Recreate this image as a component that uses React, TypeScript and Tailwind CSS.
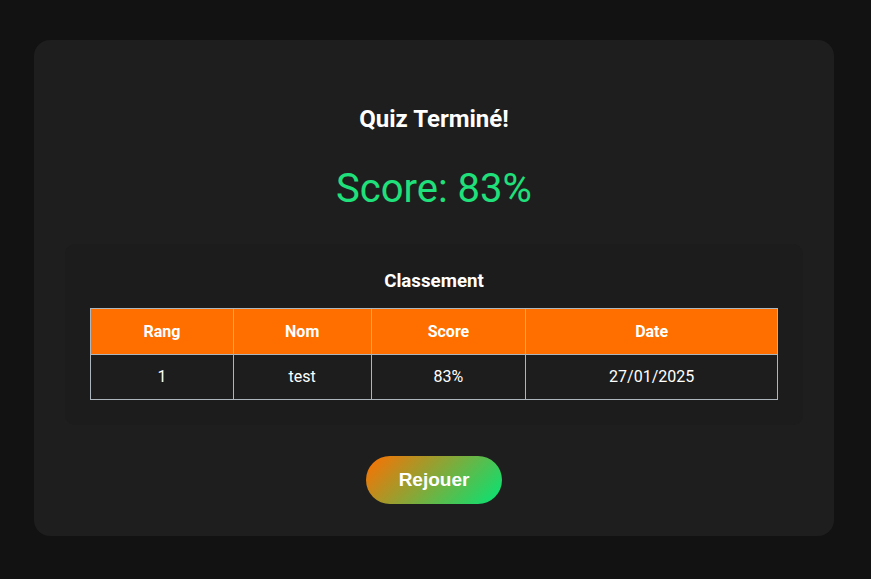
const rows = [{ rang: 1, nom: 'test', score: '83%', date: '27/01/2025' }]

function Leaderboard() {
  return (
    <div className="mt-8 rounded-[10px] bg-[#1c1c1c] p-[25px]">
      <h3 className="text-center text-[18.72px] font-bold leading-[24px] text-white">Classement</h3>
      <table className="mt-[15px] w-full border-collapse text-[16px] text-white">
        <thead>
          <tr className="bg-[#ff6f00]">
            <th className="w-[143px] border border-[#aeb6bd] py-3 font-bold leading-[21px]">Rang</th>
            <th className="w-[138px] border border-[#aeb6bd] py-3 font-bold leading-[21px]">Nom</th>
            <th className="w-[155px] border border-[#aeb6bd] py-3 font-bold leading-[21px]">Score</th>
            <th className="w-[252px] border border-[#aeb6bd] py-3 font-bold leading-[21px]">Date</th>
          </tr>
        </thead>
        <tbody>
          {rows.map(r => (
            <tr key={r.rang} className="bg-[#1d1d1d]">
              <td className="border border-[#aeb6bd] py-3 text-center leading-[20px]">{r.rang}</td>
              <td className="border border-[#aeb6bd] py-3 text-center leading-[20px]">{r.nom}</td>
              <td className="border border-[#aeb6bd] py-3 text-center leading-[20px]">{r.score}</td>
              <td className="border border-[#aeb6bd] py-3 text-center leading-[20px]">{r.date}</td>
            </tr>
          ))}
        </tbody>
      </table>
    </div>
  )
}

export default function App() {
  return (
    <div className="min-h-screen bg-[#121212] pt-10 font-['Roboto',sans-serif]">
      <div className="ml-[34px] w-[800px] rounded-2xl bg-[#1e1e1e] px-[31px] pt-[65px] pb-8">
        <h2 className="text-center text-[24px] font-bold leading-[28px] text-white">Quiz Terminé!</h2>
        <p className="mt-8 text-center text-[40px] leading-[47px] text-[#1fe07a]">Score: 83%</p>
        <Leaderboard />
        <div className="mt-[31px] flex justify-center">
          <button className="h-12 w-[136px] rounded-full bg-[linear-gradient(135deg,#ff6f00,#00e676)] font-['Liberation_Sans',Arial,sans-serif] text-[19px] font-bold text-white">
            Rejouer
          </button>
        </div>
      </div>
    </div>
  )
}
